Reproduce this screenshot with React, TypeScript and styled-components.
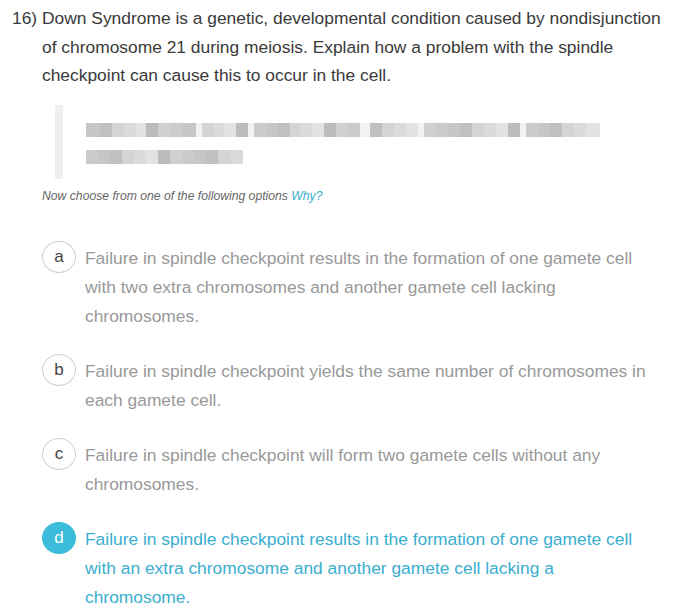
import React from 'react'
import styled, { createGlobalStyle } from 'styled-components'

const GlobalStyle = createGlobalStyle`
  html, body {
    margin: 0;
    padding: 0;
    background: #fff;
  }
  body {
    font-family: "Liberation Sans", Arial, sans-serif;
  }
`

const Page = styled.div`
  width: 700px;
  padding: 4px 34px 0 12px;
  box-sizing: border-box;
`

const Question = styled.div`
  display: flex;
  font-size: 17.4px;
  line-height: 28.5px;
  color: #3a3a3a;
`

const QuestionNumber = styled.span`
  flex: 0 0 30px;
`

const QuestionText = styled.p`
  margin: 0;
  flex: 1;
`

const Body = styled.div`
  padding-left: 30px;
`

const Answer = styled.div`
  margin: 15px 0 0 13px;
  height: 74px;
  border-left: 8px solid #efefef;
  padding: 18px 0 0 23px;
  box-sizing: border-box;
  display: flex;
  flex-direction: column;
  gap: 13px;
`

const BlurLine = styled.div`
  display: flex;
  height: 14px;
  filter: blur(0.6px);
`

const Cell = styled.span<{ $shade: string; $w: number }>`
  display: block;
  width: ${p => p.$w}px;
  background: ${p => p.$shade};
`

const Hint = styled.p`
  margin: 8px 0 0 0;
  font-size: 12.2px;
  line-height: 18px;
  font-style: italic;
  color: #666;
`

const WhyLink = styled.a`
  color: #3aaecb;
  text-decoration: none;
`

const Options = styled.ul`
  list-style: none;
  margin: 39px 0 0 0;
  padding: 0 6px 0 0;
  display: flex;
  flex-direction: column;
  gap: 26px;
`

const Option = styled.li<{ $selected?: boolean }>`
  display: flex;
  align-items: flex-start;
  gap: 9px;
  font-size: 17.4px;
  line-height: 29px;
  color: ${p => (p.$selected ? '#3aaecf' : '#999')};
`

const Letter = styled.span<{ $selected?: boolean }>`
  flex: 0 0 auto;
  width: 34px;
  height: 32px;
  margin-top: -3px;
  border-radius: 50%;
  box-sizing: border-box;
  border: 1.5px solid ${p => (p.$selected ? '#3bbcda' : '#cfcfcf')};
  background: ${p => (p.$selected ? '#3bbcda' : '#fff')};
  color: ${p => (p.$selected ? '#fff' : '#444')};
  display: flex;
  align-items: center;
  justify-content: center;
  font-size: 17px;
  line-height: 1;
`

const OptionText = styled.span`
  flex: 1;
`

// pixelated placeholder for the blurred-out student answer
const shades = ['#c6c6c6', '#bcbcbc', '#d4d4d4', '#cbcbcb', '#e2e2e2', '#c0c0c0', '#d0d0d0', '#dbdbdb']
const lineOne = [
  14, 12, 12, 12, 10, 12, 12, 12, 14, 6, 12, 10, 12, 12, 6, 12, 12, 12, 10, 12, 12, 12, 12, 12, 10,
  12, 12, 12, 12, 6, 12, 12, 12, 12, 12, 12, 12, 12, 6, 12, 12, 12, 12, 12, 14,
]
const lineTwo = [12, 12, 12, 12, 12, 12, 12, 12, 12, 12, 12, 13, 12]

const blocks = (widths: number[], seed: number) =>
  widths.map((w, i) => {
    const gap = seed === 0 && [9, 14, 24, 29, 38].includes(i)
    return <Cell key={i} $w={w} $shade={gap ? '#f2f2f2' : shades[(i * 5 + seed) % shades.length]} />
  })

const options = [
  {
    letter: 'a',
    text: 'Failure in spindle checkpoint results in the formation of one gamete cell with two extra chromosomes and another gamete cell lacking chromosomes.',
  },
  {
    letter: 'b',
    text: 'Failure in spindle checkpoint yields the same number of chromosomes in each gamete cell.',
  },
  {
    letter: 'c',
    text: 'Failure in spindle checkpoint will form two gamete cells without any chromosomes.',
  },
  {
    letter: 'd',
    text: 'Failure in spindle checkpoint results in the formation of one gamete cell with an extra chromosome and another gamete cell lacking a chromosome.',
    selected: true,
  },
]

export default function App() {
  return (
    <Page>
      <GlobalStyle />
      <Question>
        <QuestionNumber>16)</QuestionNumber>
        <QuestionText>
          Down Syndrome is a genetic, developmental condition caused by nondisjunction of chromosome 21 during
          meiosis. Explain how a problem with the spindle checkpoint can cause this to occur in the cell.
        </QuestionText>
      </Question>
      <Body>
        <Answer>
          <BlurLine>{blocks(lineOne, 0)}</BlurLine>
          <BlurLine>{blocks(lineTwo, 3)}</BlurLine>
        </Answer>
        <Hint>
          Now choose from one of the following options <WhyLink href="#">Why?</WhyLink>
        </Hint>
        <Options>
          {options.map(o => (
            <Option key={o.letter} $selected={o.selected}>
              <Letter $selected={o.selected}>{o.letter}</Letter>
              <OptionText>{o.text}</OptionText>
            </Option>
          ))}
        </Options>
      </Body>
    </Page>
  )
}
